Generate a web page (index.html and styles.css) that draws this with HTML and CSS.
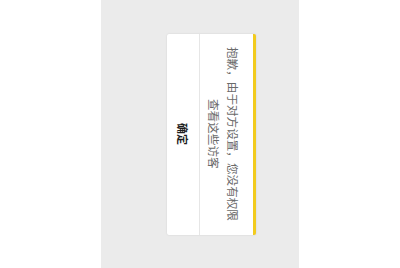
FILE: index.html
```html
<!DOCTYPE html>
<html lang="zh-CN">
<head>
<meta charset="utf-8">
<link rel="stylesheet" href="styles.css">
</head>
<body>
<div class="stage">
  <div class="dialog">
    <div class="message">抱歉，由于对方设置，您没有权限查看这些访客</div>
    <div class="actions">确定</div>
  </div>
</div>
</body>
</html>
```
FILE: styles.css
```css
html, body {
  margin: 0;
  padding: 0;
  background: #ffffff;
}
body {
  width: 400px;
  height: 268px;
  display: flex;
  justify-content: center;
  font-family: "Noto Sans CJK SC", "Noto Sans", sans-serif;
}
.stage {
  width: 175px;
  height: 268px;
  padding-left: 23px;
  background: #ebebeb;
  display: flex;
  align-items: center;
  justify-content: center;
}
.dialog {
  writing-mode: vertical-rl;
  text-orientation: sideways;
  height: 201px;
  background: #ffffff;
  border-right: 3px solid #f2cb1d;
  border-radius: 2px;
  box-shadow: 0 0 2px rgba(0, 0, 0, 0.12);
}
.message {
  padding: 13px 11px 13px 4px;
  border-left: 1px solid #e6e6e6;
  font-size: 11.6px;
  line-height: 19px;
  color: #6a6a6a;
  text-align: center;
}
.actions {
  width: 32px;
  font-size: 11px;
  font-weight: 700;
  color: #1e1e1e;
  line-height: 32px;
  text-align: center;
}
```
